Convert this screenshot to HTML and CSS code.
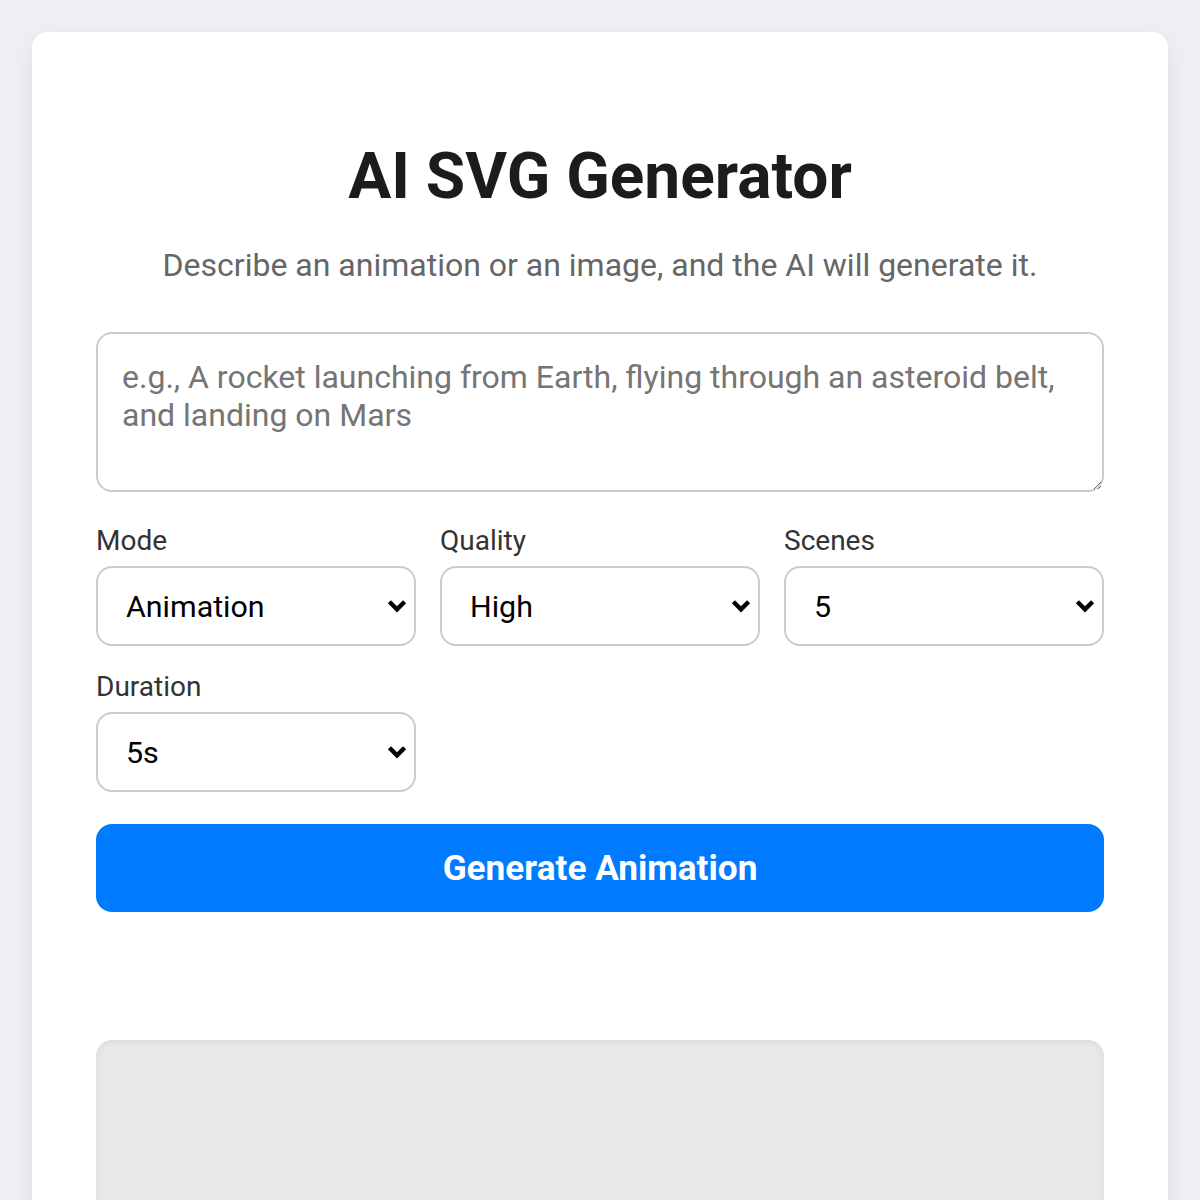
FILE: index.html
```html
<!DOCTYPE html>
<html>
<head>
    <meta charset="utf-8">
    <link rel="stylesheet" href="styles.css">
    <title>AI SVG Generator</title>
</head>
<body>
    <div class="container">
        <h1 class="title">AI SVG Generator</h1>
        <p class="subtitle">Describe an animation or an image, and the AI will generate it.</p>
        <textarea class="prompt" id="prompt-input" placeholder="e.g., A rocket launching from Earth, flying through an asteroid belt, and landing on Mars"></textarea>
        <div class="options">
            <div class="field">
                <label for="select-mode">Mode</label>
                <div class="select-wrap">
                    <select class="select" id="select-mode">
                        <option>Animation</option>
                        <option>Image</option>
                    </select>
                    <svg class="chevron" viewBox="0 0 10 7"><path d="M1.2 1.4 L5 5.2 L8.8 1.4"/></svg>
                </div>
            </div>
            <div class="field">
                <label for="select-quality">Quality</label>
                <div class="select-wrap">
                    <select class="select" id="select-quality">
                        <option>High</option>
                        <option>Medium</option>
                        <option>Low</option>
                    </select>
                    <svg class="chevron" viewBox="0 0 10 7"><path d="M1.2 1.4 L5 5.2 L8.8 1.4"/></svg>
                </div>
            </div>
            <div class="field">
                <label for="select-scenes">Scenes</label>
                <div class="select-wrap">
                    <select class="select" id="select-scenes">
                        <option>5</option>
                        <option>3</option>
                        <option>1</option>
                    </select>
                    <svg class="chevron" viewBox="0 0 10 7"><path d="M1.2 1.4 L5 5.2 L8.8 1.4"/></svg>
                </div>
            </div>
            <div class="field">
                <label for="select-duration">Duration</label>
                <div class="select-wrap">
                    <select class="select" id="select-duration">
                        <option>5s</option>
                        <option>10s</option>
                        <option>15s</option>
                    </select>
                    <svg class="chevron" viewBox="0 0 10 7"><path d="M1.2 1.4 L5 5.2 L8.8 1.4"/></svg>
                </div>
            </div>
        </div>
        <button class="generate-button" id="button-generate">Generate Animation</button>
        <div class="preview" id="preview"></div>
    </div>
</body>
</html>
```

FILE: styles.css
```css
html {
    zoom: 2;
}
body {
    margin: 0;
    padding: 16px;
    background-color: #f0f0f4;
    font-family: Roboto, "Liberation Sans", sans-serif;
    color: #1c1c1c;
}
.container {
    background-color: white;
    border-radius: 8px;
    padding: 32px;
    box-shadow: 0 4px 14px rgba(0, 0, 0, 0.08);
}
.title {
    font-size: 32px;
    font-weight: 700;
    text-align: center;
    margin: 21.5px 0 16px;
    color: #1c1c1c;
}
.subtitle {
    font-size: 16px;
    text-align: center;
    color: #666;
    margin: 0 0 24px;
}
.prompt {
    display: block;
    box-sizing: border-box;
    width: 100%;
    height: 80px;
    padding: 12px;
    border: 1px solid #ccc;
    border-radius: 8px;
    font-family: Roboto, "Liberation Sans", sans-serif;
    font-size: 16px;
    line-height: 1.2;
    color: #1c1c1c;
}
.prompt::placeholder {
    color: #757575;
}
.options {
    display: grid;
    grid-template-columns: repeat(3, 1fr);
    gap: 12px;
    margin-top: 16px;
}
.field label {
    display: block;
    font-size: 14px;
    color: #333;
    margin-bottom: 4.5px;
}
.select-wrap {
    position: relative;
}
.select {
    display: block;
    box-sizing: border-box;
    width: 100%;
    height: 40px;
    padding: 0 14px;
    border: 1px solid #ccc;
    border-radius: 8px;
    background-color: white;
    font-family: Roboto, "Liberation Sans", sans-serif;
    font-size: 15.2px;
    color: black;
    appearance: none;
}
.chevron {
    position: absolute;
    right: 4.5px;
    top: 50%;
    width: 10px;
    height: 7px;
    margin-top: -3.5px;
    pointer-events: none;
}
.chevron path {
    fill: none;
    stroke: black;
    stroke-width: 2.2;
}
.generate-button {
    display: block;
    width: 100%;
    height: 44px;
    margin-top: 16px;
    border: none;
    border-radius: 8px;
    background-color: #007bff;
    color: white;
    font-family: Roboto, "Liberation Sans", sans-serif;
    font-size: 17.6px;
    font-weight: 700;
    cursor: pointer;
}
.preview {
    margin-top: 64px;
    height: 300px;
    border-radius: 8px;
    background-color: #e8e8e8;
    box-shadow: inset 0 1px 3px rgba(0, 0, 0, 0.06);
}
```
